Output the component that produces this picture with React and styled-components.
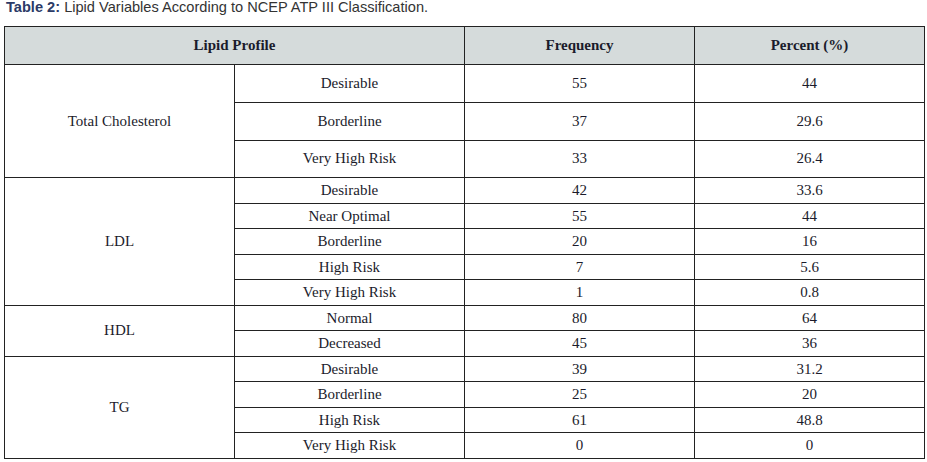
import React from "react";
import styled, { createGlobalStyle } from "styled-components";

const Global = createGlobalStyle`
  html, body {
    margin: 0;
    padding: 0;
    background: #fff;
  }
`;

const data = [
  {
    name: "Total Cholesterol",
    tall: true,
    rows: [
      ["Desirable", "55", "44"],
      ["Borderline", "37", "29.6"],
      ["Very High Risk", "33", "26.4"]
    ]
  },
  {
    name: "LDL",
    rows: [
      ["Desirable", "42", "33.6"],
      ["Near Optimal", "55", "44"],
      ["Borderline", "20", "16"],
      ["High Risk", "7", "5.6"],
      ["Very High Risk", "1", "0.8"]
    ]
  },
  {
    name: "HDL",
    rows: [
      ["Normal", "80", "64"],
      ["Decreased", "45", "36"]
    ]
  },
  {
    name: "TG",
    rows: [
      ["Desirable", "39", "31.2"],
      ["Borderline", "25", "20"],
      ["High Risk", "61", "48.8"],
      ["Very High Risk", "0", "0"]
    ]
  }
];

const S = {
  Page: styled.div`
    padding: 0 0 0 4px;
  `,
  Caption: styled.div`
    font-family: "Liberation Sans", Arial, sans-serif;
    font-size: 14.6px;
    line-height: 15px;
    color: #333;
    padding-left: 2px;
    height: 26px;
  `,
  Label: styled.b`
    color: #2b3a67;
  `,
  Table: styled.table`
    border-collapse: collapse;
    table-layout: fixed;
    width: 920px;
    font-family: "Liberation Serif", "Times New Roman", serif;
    font-size: 15px;
    color: #1b1b2b;
  `,
  Row: styled.tr`
    height: ${props => props.h}px;
  `,
  Head: styled.th`
    background: #d5dbdb;
    border: 1.6px solid #222;
    font-weight: bold;
    text-align: center;
    padding: 0;
    height: 37px;
  `,
  Cell: styled.td`
    border: 1.6px solid #222;
    text-align: center;
    vertical-align: middle;
    padding: 0;
  `
};

const App = () => (
  <S.Page>
    <Global />
    <S.Caption>
      <S.Label>Table 2:</S.Label> Lipid Variables According to NCEP ATP III
      Classification.
    </S.Caption>
    <S.Table>
      <colgroup>
        <col style={{ width: 230 }} />
        <col style={{ width: 230 }} />
        <col style={{ width: 230 }} />
        <col style={{ width: 230 }} />
      </colgroup>
      <thead>
        <S.Row h={37.5}>
          <S.Head colSpan={2}>Lipid Profile</S.Head>
          <S.Head>Frequency</S.Head>
          <S.Head>Percent (%)</S.Head>
        </S.Row>
      </thead>
      <tbody>
        {data.map(group =>
          group.rows.map((r, i) => (
            <S.Row key={group.name + i} h={group.tall ? 37.8 : 25.5}>
              {i === 0 && (
                <S.Cell rowSpan={group.rows.length}>{group.name}</S.Cell>
              )}
              <S.Cell>{r[0]}</S.Cell>
              <S.Cell>{r[1]}</S.Cell>
              <S.Cell>{r[2]}</S.Cell>
            </S.Row>
          ))
        )}
      </tbody>
    </S.Table>
  </S.Page>
);

export default App;
